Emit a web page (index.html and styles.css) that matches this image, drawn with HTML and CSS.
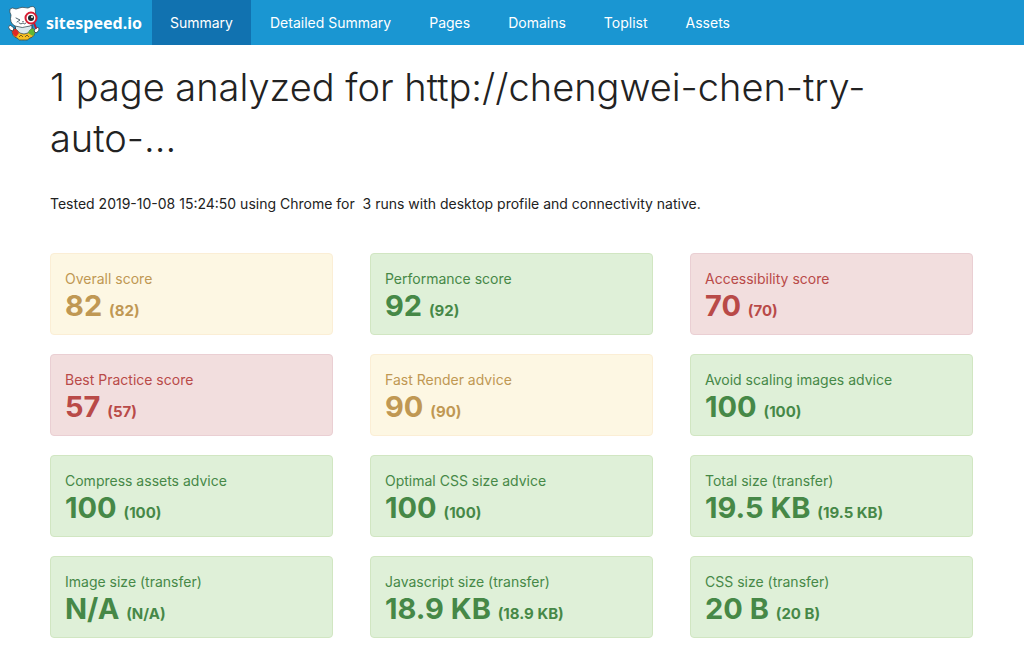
FILE: index.html
```
<!DOCTYPE html>
<html lang="en">
<head>
    <meta charset="UTF-8">
    <meta name="viewport" content="width=device-width, initial-scale=1.0">
    <title>Summary - sitespeed.io</title>
    <link rel="stylesheet" href="styles.css">
</head>
<body>
    <nav class="navbar">
        <a class="brand" href="#">
            <svg class="logo" viewBox="0 0 34 36" aria-hidden="true">
                <!-- body -->
                <path d="M7 20 H24 L24 29 Q16 32 8 28Z" fill="#dbe8ed" stroke="#263b46" stroke-width="1"/>
                <!-- swim ring -->
                <path d="M4 25 Q6 23 9 25 Q11 29 16 29 Q21 29 22 25 Q25 22 27 25 Q27 32 22 33 Q20 36 15 35 Q11 36 9 33 Q4 32 4 25Z" fill="#f6bd22" stroke="#2b3b3f" stroke-width="0.7"/>
                <path d="M4 25 Q6 23 9 25 L11 28 L8 32 Q4 30 4 25Z" fill="#df2925"/>
                <path d="M22 25 Q25 22 27 25 Q27 29 25 31 L20 28Z" fill="#60b635"/>
                <path d="M11 32 L13 30 L15 32 M17 32 L19 30 L21 32" fill="none" stroke="#765e22" stroke-width="1"/>
                <!-- paws -->
                <path d="M2 20 Q-1 22 2 25 L5 26 L6 23Z M27 24 Q29 21 31 23 Q32 26 28 28 L26 26Z" fill="#fff" stroke="#263b46" stroke-width="0.8"/>
                <!-- head -->
                <path d="M2 4 Q4 2 8 4 Q14 1 20 3 Q25 0 27 3 L28 12 Q28 18 22 21 Q14 24 7 21 Q1 18 3 10 Q1 7 2 4Z" fill="#fff" stroke="#354c56" stroke-width="0.8"/>
                <path d="M8 13 L12 15 L9 17 M11 18 Q13 20 15 18 Q17 20 18 18" fill="none" stroke="#263b46" stroke-width="0.8" stroke-linecap="round"/>
                <path d="M14 16 H16 L15 17Z" fill="#263b46"/>
                <!-- magnifier -->
                <path d="M26 18 L28 23" stroke="#bd1930" stroke-width="2" stroke-linecap="round"/>
                <circle cx="23" cy="13" r="5.5" fill="#fff" stroke="#d51d33" stroke-width="2"/>
                <circle cx="23" cy="13" r="3" fill="#202a30"/>
                <circle cx="24" cy="12" r="1" fill="#fff"/>
            </svg>
            <span>sitespeed.io</span>
        </a>
        <div class="nav-links">
            <a class="active" href="#">Summary</a>
            <a href="#">Detailed Summary</a>
            <a href="#">Pages</a>
            <a href="#">Domains</a>
            <a href="#">Toplist</a>
            <a href="#">Assets</a>
        </div>
    </nav>

    <main class="container">
        <h1>1 page analyzed for http://chengwei-chen-try-<wbr>auto-...</h1>
        <p class="tested">Tested 2019-10-08 15:24:50 using Chrome for &nbsp;3 runs with desktop profile and connectivity native.</p>

        <div class="scores">
            <div class="score warning">
                <div>Overall score</div>
                <strong>82 <small>(82)</small></strong>
            </div>
            <div class="score ok">
                <div>Performance score</div>
                <strong>92 <small>(92)</small></strong>
            </div>
            <div class="score error">
                <div>Accessibility score</div>
                <strong>70 <small>(70)</small></strong>
            </div>
            <div class="score error">
                <div>Best Practice score</div>
                <strong>57 <small>(57)</small></strong>
            </div>
            <div class="score warning">
                <div>Fast Render advice</div>
                <strong>90 <small>(90)</small></strong>
            </div>
            <div class="score ok">
                <div>Avoid scaling images advice</div>
                <strong>100 <small>(100)</small></strong>
            </div>
            <div class="score ok">
                <div>Compress assets advice</div>
                <strong>100 <small>(100)</small></strong>
            </div>
            <div class="score ok">
                <div>Optimal CSS size advice</div>
                <strong>100 <small>(100)</small></strong>
            </div>
            <div class="score ok">
                <div>Total size (transfer)</div>
                <strong>19.5 KB <small>(19.5 KB)</small></strong>
            </div>
            <div class="score ok">
                <div>Image size (transfer)</div>
                <strong>N/A <small>(N/A)</small></strong>
            </div>
            <div class="score ok">
                <div>Javascript size (transfer)</div>
                <strong>18.9 KB <small>(18.9 KB)</small></strong>
            </div>
            <div class="score ok">
                <div>CSS size (transfer)</div>
                <strong>20 B <small>(20 B)</small></strong>
            </div>
        </div>
    </main>
</body>
</html>
```
FILE: styles.css
```
* {
    box-sizing: border-box;
}
body {
    margin: 0;
    font-family: Inter, "Liberation Sans", sans-serif;
    font-size: 14px;
    line-height: 22px;
    color: #222;
    background-color: #fff;
}
.navbar {
    display: flex;
    background-color: #1a96d2;
}
.navbar a {
    color: #fff;
    text-decoration: none;
}
.brand {
    display: flex;
    align-items: center;
    gap: 4px;
    padding: 0 10px 0 8px;
    font-family: "Noto Sans", sans-serif;
    font-size: 16px;
    font-weight: bold;
}
.logo {
    width: 34px;
    height: 36px;
}
.nav-links {
    display: flex;
}
.nav-links a {
    padding: 12px 19px 11px;
}
.nav-links .active {
    padding: 12px 18px 11px;
    background-color: #1172b0;
}
.container {
    padding: 17px 51px 8px 50px;
}
h1 {
    margin: 0 0 29px;
    font-size: 38px;
    font-weight: 300;
    line-height: 51px;
}
.tested {
    margin: 0 0 38px;
}
.scores {
    display: grid;
    grid-template-columns: repeat(3, 1fr);
    gap: 19px 37px;
}
.score {
    padding: 14px 14px 12px;
    border: 1px solid;
    border-radius: 4px;
}
.score strong {
    display: block;
    font-size: 29px;
    line-height: 32px;
}
.score small {
    font-size: 15px;
    line-height: 16px;
}
.ok {
    color: #468847;
    background-color: #dff0d8;
    border-color: #d1e6c2;
}
.warning {
    color: #c09853;
    background-color: #fdf7e3;
    border-color: #fbeed5;
}
.error {
    color: #b94a48;
    background-color: #f2dede;
    border-color: #eacfd3;
}
```
